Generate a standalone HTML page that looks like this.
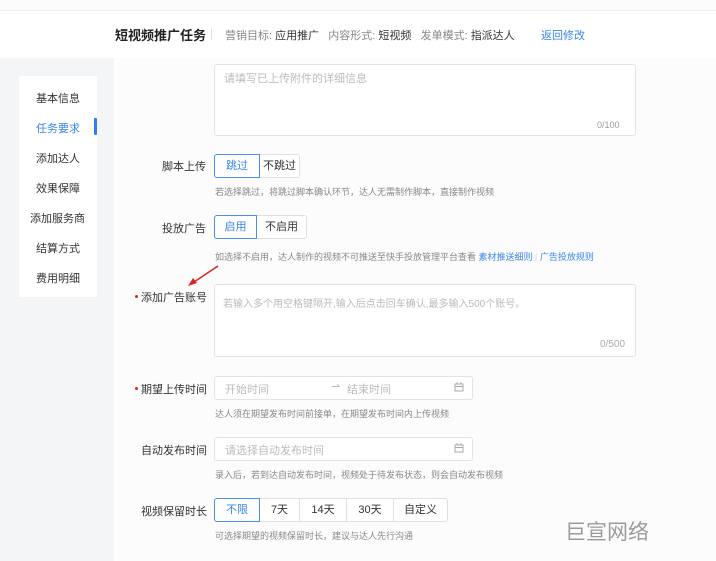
<!DOCTYPE html><html><head><meta charset="utf-8"><style>
*{margin:0;padding:0;box-sizing:border-box}
body{width:716px;height:561px;overflow:hidden;background:#fcfcfc;font-family:"Liberation Sans","Noto Sans CJK SC",sans-serif;position:relative;color:#333}
.a{position:absolute;white-space:nowrap}
.hdr{position:absolute;left:0;top:10px;width:716px;height:48px;background:#fff;border-top:1px solid #f0f0f0}
.side{position:absolute;left:0;top:58px;width:114px;height:503px;background:#f4f5f7}
.card{position:absolute;left:19px;top:76px;width:78px;height:221px;background:#fff}
.nav{font-size:11px;color:#333;left:36px}
.lbl{font-size:11px;color:#333}
.box{position:absolute;border:1px solid #e3e3e3;border-radius:3px;background:#fff}
.ph{font-size:11px;color:#bbb}
.hint{font-size:9px;color:#888}
.seg{position:absolute;display:flex;height:24px}
.seg div{flex:none;border:1px solid #e0e0e0;margin-left:-1px;font-size:11px;line-height:22px;text-align:center;color:#333;background:#fff}
.seg div.on{border-color:#4a8ef0;color:#3a86f0;z-index:1}
.seg div:first-child{border-radius:3px 0 0 3px;margin-left:0}.seg div:last-child{border-radius:0 3px 3px 0}
</style></head><body>
<div class="hdr"></div>
<div class="a" style="left:115px;top:25px;font-size:13px;font-weight:bold;color:#222">短视频推广任务</div>
<div class="a" style="left:211px;top:29px;width:1px;height:11px;background:#ddd"></div>
<div class="a" style="left:225px;top:27px;font-size:11px;color:#888">营销目标: <span style="color:#333">应用推广</span>&nbsp;&nbsp;&nbsp;内容形式: <span style="color:#333">短视频</span>&nbsp;&nbsp;&nbsp;发单模式: <span style="color:#333">指派达人</span></div>
<div class="a" style="left:541px;top:27px;font-size:11px;color:#3a86f0">返回修改</div>
<div class="side"></div>
<div class="card"></div>
<div class="a nav" style="top:90px">基本信息</div>
<div class="a nav" style="top:120px;color:#3a86f0">任务要求</div>
<div class="a" style="left:94px;top:118px;width:3px;height:17px;background:#2b7ff0;border-radius:1px"></div>
<div class="a nav" style="top:150px">添加达人</div>
<div class="a nav" style="top:180px">效果保障</div>
<div class="a nav" style="top:210px;left:30px">添加服务商</div>
<div class="a nav" style="top:240px">结算方式</div>
<div class="a nav" style="top:270px">费用明细</div>

<div class="box" style="left:214px;top:64px;width:422px;height:72px"></div>
<div class="a ph" style="left:224px;top:70px">请填写已上传附件的详细信息</div>
<div class="a ph" style="left:597px;top:120px;font-size:9px;color:#999">0/100</div>

<div class="a lbl" style="left:162px;top:158px">脚本上传</div>
<div class="seg" style="left:214px;top:154px"><div class="on" style="width:46px">跳过</div><div style="width:41px">不跳过</div></div>
<div class="a hint" style="left:215px;top:185px">若选择跳过，将跳过脚本确认环节，达人无需制作脚本，直接制作视频</div>

<div class="a lbl" style="left:162px;top:220px">投放广告</div>
<div class="seg" style="left:214px;top:215px"><div class="on" style="width:43px">启用</div><div style="width:51px">不启用</div></div>
<div class="a hint" style="left:215px;top:250px">如选择不启用，达人制作的视频不可推送至快手投放管理平台查看 <span style="color:#3a86f0">素材推送细则</span> <span style="color:#ddd">|</span> <span style="color:#3a86f0">广告投放规则</span></div>
<svg class="a" style="left:185px;top:264px" width="36" height="25"><line x1="33" y1="2" x2="6" y2="20" stroke="#e02020" stroke-width="1.5"/><path d="M3 22 L12 19 L8 14 Z" fill="#e02020"/></svg>

<div class="a" style="left:135px;top:295px;width:3px;height:3px;border-radius:50%;background:#e02020"></div>
<div class="a lbl" style="left:141px;top:289px">添加广告账号</div>
<div class="box" style="left:214px;top:284px;width:422px;height:73px"></div>
<div class="a ph" style="left:223px;top:295px;font-size:10px">若输入多个用空格键隔开,输入后点击回车确认,最多输入500个账号。</div>
<div class="a ph" style="left:600px;top:339px;font-size:10px;color:#aaa">0/500</div>

<div class="a" style="left:135px;top:387px;width:3px;height:3px;border-radius:50%;background:#e02020"></div>
<div class="a lbl" style="left:141px;top:381px">期望上传时间</div>
<div class="box" style="left:214px;top:376px;width:259px;height:24px"></div>
<div class="a ph" style="left:225px;top:381px">开始时间</div>
<div class="a ph" style="left:331px;top:380px">⇀</div>
<div class="a ph" style="left:347px;top:381px">结束时间</div>
<svg class="a" style="left:454px;top:382px" width="10" height="10"><rect x="1" y="2" width="8" height="7" fill="none" stroke="#aaa"/><line x1="1" y1="4.5" x2="9" y2="4.5" stroke="#aaa"/><line x1="3" y1="0" x2="3" y2="2" stroke="#aaa"/><line x1="7" y1="0" x2="7" y2="2" stroke="#aaa"/></svg>
<div class="a hint" style="left:215px;top:407px">达人须在期望发布时间前接单，在期望发布时间内上传视频</div>

<div class="a lbl" style="left:141px;top:442px">自动发布时间</div>
<div class="box" style="left:214px;top:437px;width:259px;height:24px"></div>
<div class="a ph" style="left:225px;top:442px">请选择自动发布时间</div>
<svg class="a" style="left:454px;top:443px" width="10" height="10"><rect x="1" y="2" width="8" height="7" fill="none" stroke="#aaa"/><line x1="1" y1="4.5" x2="9" y2="4.5" stroke="#aaa"/><line x1="3" y1="0" x2="3" y2="2" stroke="#aaa"/><line x1="7" y1="0" x2="7" y2="2" stroke="#aaa"/></svg>
<div class="a hint" style="left:215px;top:468px">录入后，若到达自动发布时间，视频处于待发布状态，则会自动发布视频</div>

<div class="a lbl" style="left:141px;top:503px">视频保留时长</div>
<div class="seg" style="left:214px;top:498px"><div class="on" style="width:46px">不限</div><div style="width:41px">7天</div><div style="width:48px">14天</div><div style="width:48px">30天</div><div style="width:55px">自定义</div></div>
<div class="a hint" style="left:215px;top:529px">可选择期望的视频保留时长，建议与达人先行沟通</div>

<div class="a" style="left:565px;top:516px;font-size:21px;color:#9a9a9a">巨宣网络</div>
</body></html>
